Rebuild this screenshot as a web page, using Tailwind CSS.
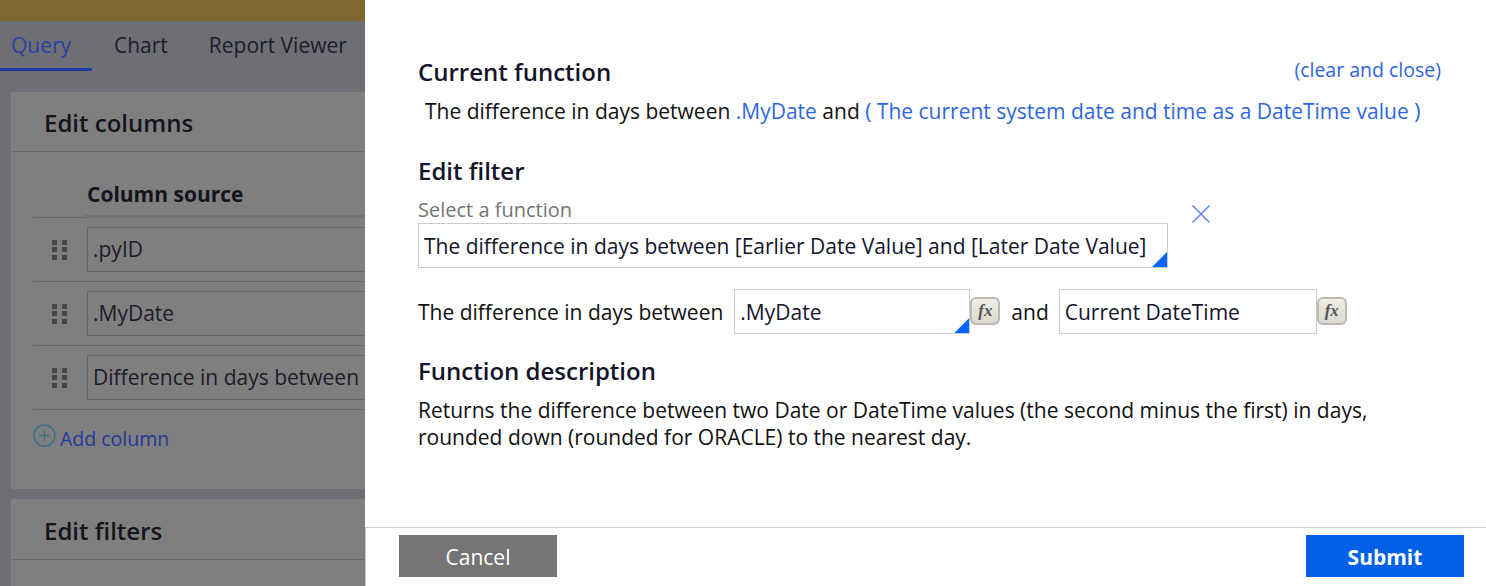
<!DOCTYPE html>
<html lang="en">
  <head>
    <meta charset="utf-8" />
    <meta content="width=device-width, initial-scale=1.0" name="viewport" />
    <title>Edit function</title>
    <script src="https://cdn.jsdelivr.net/npm/@tailwindcss/browser@4"></script>
  </head>
  <body class="h-[586px] w-[1486px] overflow-hidden font-['Open_Sans',sans-serif] text-[21px] text-[#14142b]">
    <div class="flex h-[586px]">
      <!-- dimmed page behind the modal -->
      <div class="w-[365px] h-[586px] overflow-hidden shrink-0 bg-[#6e6f74] text-[#14141f]">
        <div class="h-[21px] bg-[#7f6730]"></div>
        <div class="flex h-[50px] text-[#1b1c2a]">
          <div class="w-[92px] pl-[11px] pt-[9px] leading-[30px] border-b-[3px] border-[#1f3a9e] text-[#2a43a3]">Query</div>
          <div class="pl-[22px] pt-[9px] leading-[30px]">Chart</div>
          <div class="pl-[41px] pt-[9px] leading-[30px] whitespace-nowrap">Report Viewer</div>
        </div>
        <div class="ml-[11px] mt-[21px] h-[397px] bg-[#7f7f7f] rounded-[2px] overflow-hidden">
          <div class="h-[60px] pl-[33px] pt-[14px] text-[24px] leading-[33px] font-semibold border-b border-[#6a6a6a]">Edit columns</div>
          <div class="ml-[22px] h-[66px] border-b border-[#6a6a6a] pl-[54px] pt-[28px] leading-[29px] font-bold relative">
            Column source
            <div class="absolute left-[51px] right-0 bottom-[-1px] h-[3px] bg-[#737373]"></div>
          </div>
          <div class="ml-[22px] h-[64px] border-b border-[#6a6a6a] flex items-center">
            <svg class="w-[15px] h-[20px] ml-[19px] mr-[20px] shrink-0" viewBox="0 0 15 20" fill="#454545"><rect x="0" y="0" width="5" height="5"/><rect x="10" y="0" width="5" height="5"/><rect x="0" y="7" width="5" height="5"/><rect x="10" y="7" width="5" height="5"/><rect x="0" y="15" width="5" height="5"/><rect x="10" y="15" width="5" height="5"/></svg>
            <div class="w-[300px] h-[45px] shrink-0 border border-[#666] pl-[5px] leading-[43px] text-[#1b1c2a]">.pyID</div>
          </div>
          <div class="ml-[22px] h-[64px] border-b border-[#6a6a6a] flex items-center">
            <svg class="w-[15px] h-[20px] ml-[19px] mr-[20px] shrink-0" viewBox="0 0 15 20" fill="#454545"><rect x="0" y="0" width="5" height="5"/><rect x="10" y="0" width="5" height="5"/><rect x="0" y="7" width="5" height="5"/><rect x="10" y="7" width="5" height="5"/><rect x="0" y="15" width="5" height="5"/><rect x="10" y="15" width="5" height="5"/></svg>
            <div class="w-[300px] h-[45px] shrink-0 border border-[#666] pl-[5px] leading-[43px] text-[#1b1c2a]">.MyDate</div>
          </div>
          <div class="ml-[22px] h-[64px] border-b border-[#6a6a6a] flex items-center">
            <svg class="w-[15px] h-[20px] ml-[19px] mr-[20px] shrink-0" viewBox="0 0 15 20" fill="#454545"><rect x="0" y="0" width="5" height="5"/><rect x="10" y="0" width="5" height="5"/><rect x="0" y="7" width="5" height="5"/><rect x="10" y="7" width="5" height="5"/><rect x="0" y="15" width="5" height="5"/><rect x="10" y="15" width="5" height="5"/></svg>
            <div class="w-[300px] h-[45px] shrink-0 border border-[#666] pl-[5px] leading-[43px] text-[#1b1c2a] whitespace-nowrap overflow-hidden">Difference in days between</div>
          </div>
          <div class="ml-[22px] flex items-start pt-[14px] text-[#24399a]">
            <svg class="w-[23px] h-[23px] shrink-0" viewBox="0 0 23 23" fill="none" stroke="#3a7288" stroke-width="1.3"><circle cx="11.5" cy="11.5" r="10.5"/><path d="M11.5 6v11M6 11.5h11"/></svg>
            <span class="ml-[4px] mt-[1px] leading-[27px] text-[19.5px]">Add column</span>
          </div>
        </div>
        <div class="ml-[11px] mt-[10px] h-[87px] bg-[#7f7f7f] rounded-t-[2px]">
          <div class="h-[61px] pl-[33px] pt-[15px] text-[24px] leading-[33px] font-semibold border-b border-[#6a6a6a]">Edit filters</div>
        </div>
      </div>

      <!-- modal -->
      <div class="flex-1 h-[586px] bg-white flex flex-col">
        <div class="h-[527px] pl-[53px] pr-[44px] pt-[55px]">
          <div class="flex justify-between items-start">
            <h2 class="text-[24px] leading-[33px] font-semibold">Current function</h2>
            <a class="text-[#2f66e0] text-[19.5px] leading-[27px] mt-[1px] mr-[1px]" href="#">(clear and close)</a>
          </div>
          <p class="mt-[10px] ml-[7px] leading-[27px] text-[#111] whitespace-nowrap">The difference in days between <span class="text-[#2f66e0]">.MyDate</span> and <span class="text-[#2f66e0]">( The current system date and time as a DateTime value )</span></p>

          <h2 class="mt-[29px] text-[24px] leading-[33px] font-semibold">Edit filter</h2>
          <div class="mt-[9px] leading-[27px] text-[20px] text-[#757575]">Select a function</div>
          <div class="flex items-start">
            <div class="relative w-[750px] h-[45px] border border-[#ccc] pl-[5px] leading-[44px] whitespace-nowrap">
              The difference in days between [Earlier Date Value] and [Later Date Value]
              <div class="absolute right-0 bottom-0 w-[15px] h-[15px] bg-[#0066ff] [clip-path:polygon(100%_0,100%_100%,0_100%)]"></div>
            </div>
            <svg class="w-[18px] h-[18px] ml-[24px] mt-[-18px]" viewBox="0 0 18 18" fill="none" stroke="#5f83f5" stroke-width="1.5"><path d="M0.5 0.5l17 17M17.5 0.5l-17 17"/></svg>
          </div>

          <div class="flex items-center mt-[21px]">
            <span class="mt-[2px] leading-[27px] text-[#111] whitespace-nowrap">The difference in days between</span>
            <div class="relative ml-[11px] w-[236px] h-[45px] border border-[#ccc] pl-[5px] leading-[44px]">
              .MyDate
              <div class="absolute right-0 bottom-0 w-[15px] h-[15px] bg-[#0066ff] [clip-path:polygon(100%_0,100%_100%,0_100%)]"></div>
            </div>
            <div class="w-[30px] h-[28px] mt-[-2px] flex items-center justify-center border-2 border-[#bdb9b2] rounded-[6px] bg-gradient-to-b from-[#efede6] to-[#dcd9cf] font-['Liberation_Serif',serif] italic font-bold text-[17px] text-[#555]">fx</div>
            <span class="mt-[2px] ml-[11px] leading-[27px] text-[#111]">and</span>
            <div class="ml-[10px] w-[258px] h-[45px] border border-[#ccc] pl-[5px] leading-[44px] whitespace-nowrap">Current DateTime</div>
            <div class="w-[30px] h-[28px] mt-[-2px] flex items-center justify-center border-2 border-[#bdb9b2] rounded-[6px] bg-gradient-to-b from-[#efede6] to-[#dcd9cf] font-['Liberation_Serif',serif] italic font-bold text-[17px] text-[#555]">fx</div>
          </div>

          <h2 class="mt-[20px] text-[24px] leading-[33px] font-semibold">Function description</h2>
          <p class="mt-[10px] leading-[27px] text-[#111] w-[1000px]">Returns the difference between two Date or DateTime values (the second minus the first) in days, rounded down (rounded for ORACLE) to the nearest day.</p>
        </div>
        <div class="h-[59px] border-t border-l border-[#ccc] flex justify-between items-start pl-[33px] pr-[22px] pt-[7px]">
          <button class="w-[158px] h-[42px] pt-[4px] bg-[#757575] text-white">Cancel</button>
          <button class="w-[158px] h-[42px] pt-[4px] bg-[#0060e6] text-white font-bold">Submit</button>
        </div>
      </div>
    </div>
  </body>
</html>
